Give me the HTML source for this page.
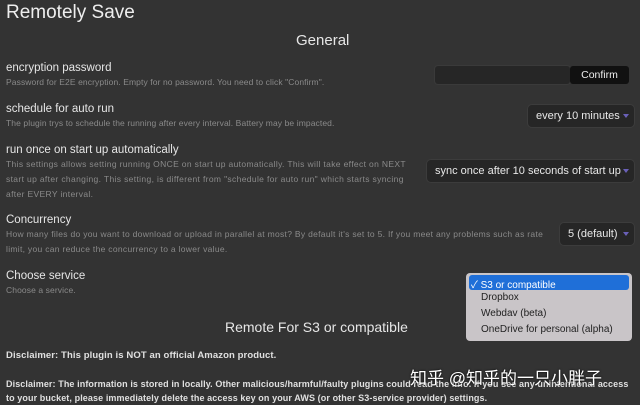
<!DOCTYPE html>
<html><head><meta charset="utf-8"><style>
body{margin:0;width:640px;height:404px;overflow:hidden;background:#333;font-family:"Liberation Sans","Noto Sans CJK SC",sans-serif;color:#ddd;position:relative}
.a{position:absolute;white-space:nowrap}
.t{font-size:11.5px;color:#e6e6e6}
.d{font-size:8.5px;color:#8a8a8a;line-height:15px;white-space:normal;letter-spacing:0.1px}
.sel{position:absolute;background:#262626;border-radius:4px;color:#e8e8e8;font-size:11px;height:22px;line-height:22px;padding-left:8px;box-sizing:border-box;box-shadow:0 0 0 1px #3c3c3c;white-space:nowrap;overflow:hidden}
.sel:after{content:"";position:absolute;right:5px;top:9px;border:3px solid transparent;border-top:4px solid #6a60b8}
.b{font-size:9.5px;color:#e0e0e0;font-weight:bold;letter-spacing:0.1px}
</style></head><body>
<div class="a" style="left:6px;top:2px;font-size:19px;color:#eee">Remotely Save</div>
<div class="a" style="left:296px;top:32px;font-size:15px;color:#e6e6e6">General</div>

<div class="a t" style="left:6px;top:62px">encryption password</div>
<div class="a d" style="left:6px;top:75px">Password for E2E encryption. Empty for no password. You need to click "Confirm".</div>
<div class="a" style="left:435px;top:66px;width:135px;height:18px;background:#262626;border-radius:3px;box-shadow:0 0 0 1px #3a3a3a"></div>
<div class="a" style="left:570px;top:66px;width:59px;height:18px;background:#111;border-radius:3px;color:#eee;font-size:10.5px;line-height:18px;text-align:center">Confirm</div>

<div class="a t" style="left:6px;top:103px">schedule for auto run</div>
<div class="a d" style="left:6px;top:116px">The plugin trys to schedule the running after every interval. Battery may be impacted.</div>
<div class="sel" style="left:528px;top:105px;width:106px">every 10 minutes</div>

<div class="a t" style="left:6px;top:144px">run once on start up automatically</div>
<div class="a d" style="left:6px;top:157px;width:412px;letter-spacing:0.35px">This settings allows setting running ONCE on start up automatically. This will take effect on NEXT start up after changing. This setting, is different from "schedule for auto run" which starts syncing after EVERY interval.</div>
<div class="sel" style="left:427px;top:160px;width:207px">sync once after 10 seconds of start up</div>

<div class="a t" style="left:6px;top:214px">Concurrency</div>
<div class="a d" style="left:6px;top:227px;width:550px;letter-spacing:0.3px">How many files do you want to download or upload in parallel at most? By default it's set to 5. If you meet any problems such as rate limit, you can reduce the concurrency to a lower value.</div>
<div class="sel" style="left:560px;top:223px;width:74px">5 (default)</div>

<div class="a t" style="left:6px;top:270px">Choose service</div>
<div class="a d" style="left:6px;top:283px">Choose a service.</div>
<div class="a" style="left:466px;top:273px;width:166px;height:68px;background:#c9c5c8;border-radius:4px"></div>
<div class="a" style="left:469px;top:275px;width:160px;height:15px;background:#1f6fd8;border-radius:3px"></div>
<div class="a" style="left:471px;top:276px;font-size:10px;color:#fff">✓ S3 or compatible</div>
<div class="a" style="left:481px;top:292px;font-size:10px;color:#222">Dropbox</div>
<div class="a" style="left:481px;top:308px;font-size:10px;color:#222">Webdav (beta)</div>
<div class="a" style="left:481px;top:324px;font-size:10px;color:#222">OneDrive for personal (alpha)</div>

<div class="a" style="left:225px;top:319px;font-size:14px;color:#e6e6e6">Remote For S3 or compatible</div>
<div class="a b" style="left:6px;top:350px">Disclaimer: This plugin is NOT an official Amazon product.</div>
<div class="a b" style="left:6px;top:377px;white-space:normal;width:625px;line-height:14px;font-size:9px">Disclaimer: The information is stored in locally. Other malicious/harmful/faulty plugins could read the info. If you see any unintentional access to your bucket, please immediately delete the access key on your AWS (or other S3-service provider) settings.</div>
<div class="a" style="left:410px;top:364px;font-size:17px;color:#fff;text-shadow:0 0 2px #000">知乎 @知乎的一只小胖子</div>
</body></html>
